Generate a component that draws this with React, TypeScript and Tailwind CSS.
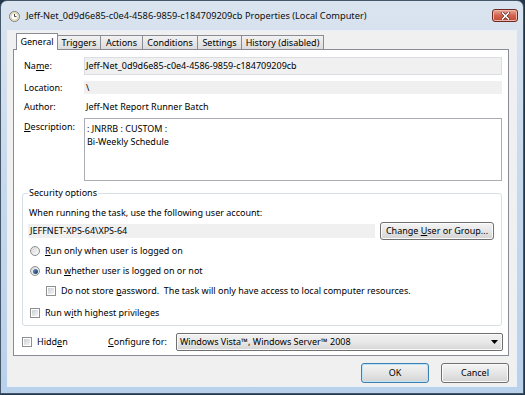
import React from "react";

const Radio: React.FC<{ checked?: boolean }> = ({ checked }) => (
  <span className="w-[10px] h-[10px] rounded-full border border-[#8e8f8f] bg-gradient-to-br from-[#d6d6d6] to-[#fdfdfd] flex items-center justify-center shrink-0">
    {checked && <span className="w-[5px] h-[5px] rounded-full bg-gradient-to-br from-[#6d9ad0] to-[#0c2f62]" />}
  </span>
);

const Check: React.FC = () => (
  <span className="w-[10px] h-[10px] border border-[#8e8f8f] bg-white p-[1px] shrink-0 flex">
    <span className="flex-1 bg-gradient-to-br from-[#cbcfd5] to-[#f6f6f6]" />
  </span>
);

const Btn: React.FC<{ children: React.ReactNode; def?: boolean; className?: string }> = ({ children, def, className }) => (
  <div
    className={
      "flex items-center justify-center rounded-[3px] border bg-gradient-to-b from-[#f4f4f4] via-[#e6e6e6] to-[#d3d3d3] " +
      (def ? "border-[#3c7fb1] shadow-[inset_0_0_0_1px_#bfe3f7] " : "border-[#707070] shadow-[inset_0_0_0_1px_#fbfbfb] ") +
      (className ?? "")
    }
  >
    {children}
  </div>
);

const tabs = [
  { label: "Triggers", w: "w-[44px]" },
  { label: "Actions", w: "w-[43px]" },
  { label: "Conditions", w: "w-[56px]" },
  { label: "Settings", w: "w-[45px]" },
  { label: "History (disabled)", w: "w-[83px]" },
];

export default function App() {
  return (
    <div className="w-[525px] h-[395px] bg-[#22384a] overflow-hidden font-['Noto_Sans',sans-serif] text-[9px] leading-[12px] text-black">
      <div className="w-[524px] h-[394px] border border-[#45576b] rounded-t-[7px] bg-gradient-to-b from-[#dae4ef] via-[#c6d8ec] to-[#b9d1ea] flex flex-col">
        {/* title bar */}
        <div className="h-[29px] shrink-0 flex items-start pl-[8px] pr-[5px]">
          <svg width="11" height="11" viewBox="0 0 11 11" className="mt-[10px]">
            <circle cx="5.5" cy="5.5" r="5" fill="#f3f3f3" stroke="#7c7c7c" />
            <circle cx="5.5" cy="5.5" r="3.6" fill="#fff" stroke="#c9b54a" strokeWidth="0.6" />
            <path d="M5.5 3v2.6h2" fill="none" stroke="#333" strokeWidth="0.9" />
          </svg>
          <span className="ml-[6px] mt-[9px] text-[9.25px] text-[#0d0d0d]">
            Jeff-Net_0d9d6e85-c0e4-4586-9859-c184709209cb Properties (Local Computer)
          </span>
          <div className="flex-1" />
          <div className="mt-[8px] w-[26px] h-[13px] rounded-[3px] border border-[#6b2a22] bg-gradient-to-b from-[#e9a99b] via-[#d2634f] to-[#c24a33] flex items-center justify-center shadow-[inset_0_0_0_1px_#f0b4a8]">
            <svg width="9" height="8" viewBox="0 0 9 8">
              <path d="M1.5 1l6 6M7.5 1l-6 6" stroke="#5a2a24" strokeWidth="3" strokeLinecap="square" />
              <path d="M1.5 1l6 6M7.5 1l-6 6" stroke="#fff" strokeWidth="1.6" strokeLinecap="square" />
            </svg>
          </div>
        </div>

        {/* client */}
        <div className="mx-[6px] mb-[6px] flex-1 bg-[#f0f0f0] border border-[#e9f0f8] flex flex-col">
          {/* tab strip */}
          <div className="h-[17px] mt-[1px] pl-[8px] flex items-end">
            <div className="w-[42px] h-[17px] -mb-[1px] z-10 bg-white border border-b-0 border-[#898c95] flex items-start justify-center pt-[2px]">
              General
            </div>
            {tabs.map((t) => (
              <div
                key={t.label}
                className={t.w + " h-[14px] -ml-[1px] first:ml-0 bg-gradient-to-b from-[#f2f2f2] to-[#dcdcdc] border border-b-0 border-[#898c95] flex items-center justify-center"}
              >
                {t.label}
              </div>
            ))}
          </div>

          {/* panel */}
          <div className="ml-[5px] mr-[7px] h-[307px] bg-white border border-[#898c95] flex flex-col pl-[8px] pr-[6px] pt-[7px]">
            <div className="flex items-center h-[18px]">
              <div className="w-[62px] pl-[2px]">
                Na<u className="underline-offset-1">m</u>e:
              </div>
              <div className="flex-1 h-[18px] bg-[#f0f0f0] border border-[#dadde2] flex items-center pl-[1px]">
                Jeff-Net_0d9d6e85-c0e4-4586-9859-c184709209cb
              </div>
            </div>
            <div className="flex items-center h-[13px] mt-[6px]">
              <div className="w-[62px] pl-[2px]">Location:</div>
              <div className="flex-1 h-[13px] bg-[#f0f0f0] flex items-center pl-[2px]">\</div>
            </div>
            <div className="flex items-center h-[14px] mt-[6px]">
              <div className="w-[62px] pl-[2px]">Author:</div>
              <div className="flex-1 pl-[2px]">Jeff-Net Report Runner Batch</div>
            </div>
            <div className="flex items-start h-[63px] mt-[4px]">
              <div className="w-[62px] pl-[2px] pt-[3px]">
                <u className="underline-offset-1">D</u>escription:
              </div>
              <div className="flex-1 h-[63px] border border-[#abadb3] bg-white pl-[2px] pt-[3px] leading-[13px]">
                <div>: JNRRB : CUSTOM :</div>
                <div>Bi-Weekly Schedule</div>
              </div>
            </div>

            <fieldset className="mt-[6px] h-[139px] border border-[#d5dfe5] rounded-[3px] pl-[6px] pr-[7px] pb-[6px]">
              <legend className="-ml-[1px] px-[1px] leading-[12px]">Security options</legend>
              <div className="mt-[8px] h-[12px]">When running the task, use the following user account:</div>
              <div className="mt-[3px] h-[18px] flex items-center">
                <div className="flex-1 -ml-[1px] h-[14px] bg-[#f0f0f0] flex items-center pl-[2px]">JEFFNET-XPS-64\XPS-64</div>
                <Btn className="ml-[5px] w-[114px] h-[18px]">
                  <span>
                    Change <u className="underline-offset-1">U</u>ser or Group...
                  </span>
                </Btn>
              </div>
              <div className="mt-[5px] h-[12px] flex items-center pl-[1px] gap-[5px]">
                <Radio />
                <span>
                  <u className="underline-offset-1">R</u>un only when user is logged on
                </span>
              </div>
              <div className="mt-[8px] h-[12px] flex items-center pl-[1px] gap-[5px]">
                <Radio checked />
                <span>
                  Run <u className="underline-offset-1">w</u>hether user is logged on or not
                </span>
              </div>
              <div className="mt-[8px] h-[12px] flex items-center pl-[17px] gap-[5px]">
                <Check />
                <span>
                  Do not store <u className="underline-offset-1">p</u>assword.&nbsp; The task will only have access to local computer resources.
                </span>
              </div>
              <div className="mt-[10px] h-[12px] flex items-center pl-[1px] gap-[5px]">
                <Check />
                <span>
                  Run w<u className="underline-offset-1">i</u>th highest privileges
                </span>
              </div>
            </fieldset>

            <div className="mt-[7px] h-[18px] flex items-center -mr-[1px]">
              <div className="w-[86px] flex items-center gap-[5px]">
                <Check />
                <span>
                  Hidd<u className="underline-offset-1">e</u>n
                </span>
              </div>
              <div className="w-[68px]">
                <u className="underline-offset-1">C</u>onfigure for:
              </div>
              <div className="flex-1 h-[18px] rounded-[2px] border border-[#707070] bg-gradient-to-b from-[#f2f2f2] via-[#e8e8e8] to-[#d6d6d6] flex items-center pl-[3px] pr-[4px] shadow-[inset_0_0_0_1px_#fafafa]">
                <span className="flex-1">Windows Vista™, Windows Server™ 2008</span>
                <svg width="7" height="4" viewBox="0 0 7 4">
                  <path d="M0 0h7L3.5 4z" fill="#000" />
                </svg>
              </div>
            </div>
          </div>

          {/* buttons */}
          <div className="mt-[7px] mr-[7px] flex justify-end gap-[12px]">
            <Btn def className="w-[68px] h-[20px]">OK</Btn>
            <Btn className="w-[68px] h-[20px]">Cancel</Btn>
          </div>
        </div>
      </div>
    </div>
  );
}
